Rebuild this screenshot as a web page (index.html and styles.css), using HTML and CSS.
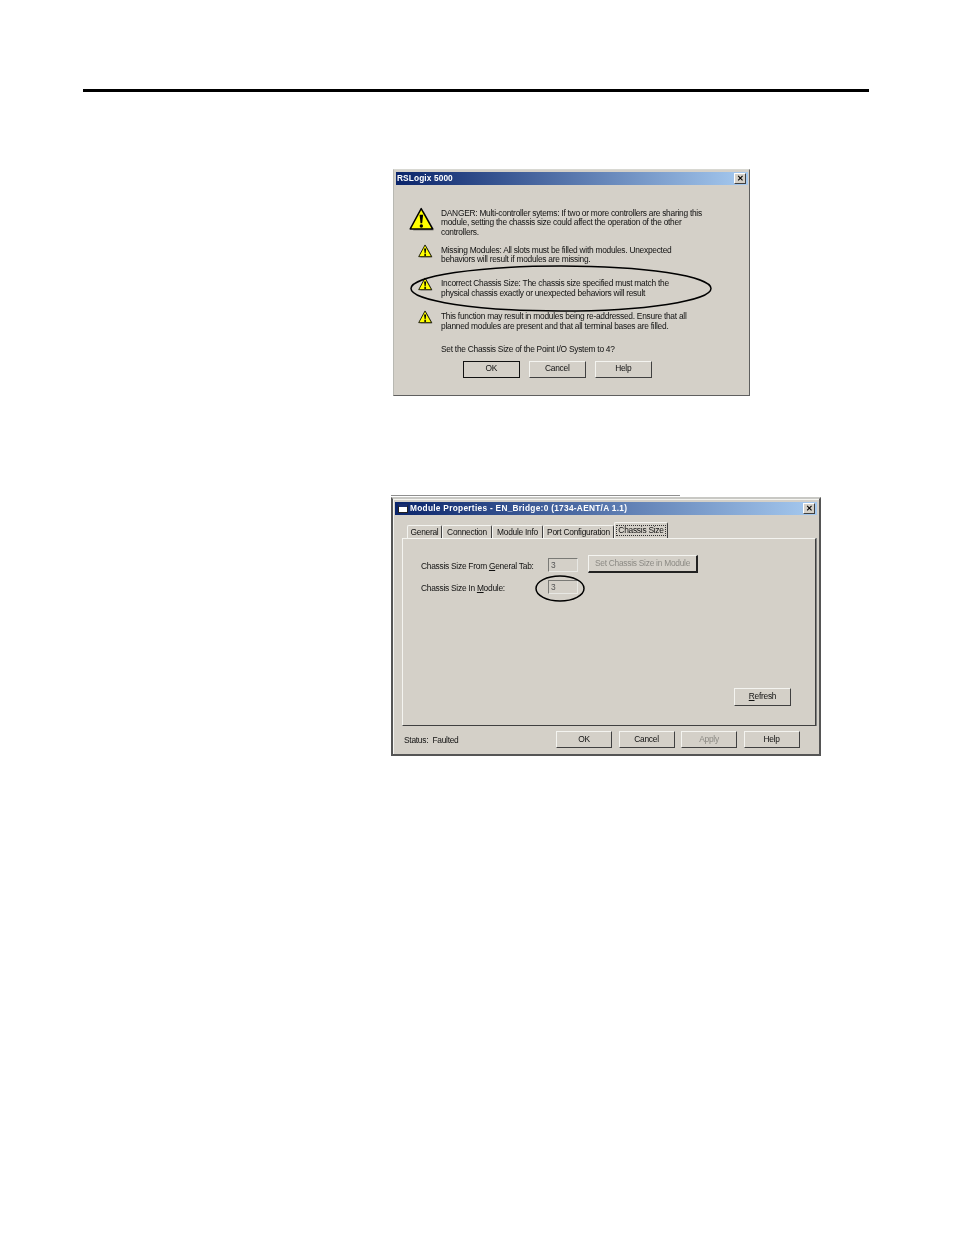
FILE: index.html
```html
<!DOCTYPE html>
<html lang="en">
<head>
<meta charset="utf-8">
<title>Chassis Size</title>
<link rel="stylesheet" href="styles.css">
</head>
<body>
<svg class="defs" width="0" height="0" aria-hidden="true">
  <symbol id="warn" viewBox="0 0 32 32">
    <path d="M5 29 L30 29 L31 27 L30 26 L18 5 Z" fill="#8a8780"/>
    <path d="M15 2 L29 27 L1.500 27 Z" fill="#ffff00" stroke="#000" stroke-width="1.800" stroke-linejoin="round"/>
    <path d="M13 9.500 H17.400 L16.200 20 H14.200 Z" fill="#000"/>
    <circle cx="15.200" cy="23.300" r="2.100" fill="#000"/>
  </symbol>
</svg>
<div class="rule"></div>

<section class="dlg dlg-one">
  <header class="title"><span class="title-text">RSLogix 5000</span><span class="close">✕</span></header>
  <div class="msgs">
    <div class="msg msg-danger">
      <svg class="icon-big"><use href="#warn"/></svg>
      <p>DANGER: Multi-controller sytems: If two or more controllers are sharing this<br>module, setting the chassis size could affect the operation of the other<br>controllers.</p>
    </div>
    <div class="msg msg-missing">
      <svg class="icon-small"><use href="#warn"/></svg>
      <p>Missing Modules: All slots must be filled with modules. Unexpected<br>behaviors will result if modules are missing.</p>
    </div>
    <div class="msg msg-size">
      <svg class="icon-small"><use href="#warn"/></svg>
      <p>Incorrect Chassis Size: The chassis size specified must match the<br>physical chassis exactly or unexpected behaviors will result</p>
    </div>
    <div class="msg msg-func">
      <svg class="icon-small"><use href="#warn"/></svg>
      <p>This function may result in modules being re-addressed. Ensure that all<br>planned modules are present and that all terminal bases are filled.</p>
    </div>
    <p class="question">Set the Chassis Size of the Point I/O System to 4?</p>
  </div>
  <div class="btns-one">
    <span class="btn btn-default">OK</span>
    <span class="btn">Cancel</span>
    <span class="btn">Help</span>
  </div>
  <svg class="ellipse ellipse-one" viewBox="0 0 304 47"><ellipse cx="152" cy="23.500" rx="150" ry="22.500" fill="none" stroke="#000" stroke-width="1.500"/></svg>
</section>

<div class="stray"></div>
<section class="dlg dlg-two">
  <header class="title">
    <span class="sysicon"></span>
    <span class="title-text">Module Properties - EN_Bridge:0 (1734-AENT/A 1.1)</span>
    <span class="close">✕</span>
  </header>
  <nav class="tabs">
    <span class="tab tab-general">General</span>
    <span class="tab tab-conn">Connection</span>
    <span class="tab tab-info">Module Info</span>
    <span class="tab tab-port">Port Configuration</span>
    <span class="tab tab-active"><span class="focus">Chassis Size</span></span>
  </nav>
  <div class="panel">
    <div class="field-row field-row-a">
      <span class="label">Chassis Size From <u>G</u>eneral Tab:</span>
      <span class="input">3</span>
      <span class="btn btn-set">Set Chassis Size in Module</span>
    </div>
    <div class="field-row field-row-b">
      <span class="label">Chassis Size In <u>M</u>odule:</span>
      <span class="input">3</span>
    </div>
    <div class="refresh-row"><span class="btn btn-refresh"><span><u>R</u>efresh</span></span></div>
    <svg class="ellipse ellipse-two" viewBox="0 0 50 27"><ellipse cx="25" cy="13.500" rx="24" ry="12.500" fill="none" stroke="#000" stroke-width="1.500"/></svg>
  </div>
  <footer class="foot">
    <span class="status">Status:&nbsp; Faulted</span>
    <span class="btn">OK</span>
    <span class="btn">Cancel</span>
    <span class="btn btn-disabled">Apply</span>
    <span class="btn">Help</span>
  </footer>
</section>
</body>
</html>
```
FILE: styles.css
```css
* { box-sizing: border-box; }
html, body { margin: 0; padding: 0; background: #fff; }
body {
  width: 954px;
  height: 1235px;
  overflow: hidden;
  font-family: "Liberation Sans", Arial, sans-serif;
  font-size: 8.400px;
  letter-spacing: -0.260px;
  line-height: 9.500px;
  color: #111;
  padding-top: 89px;
}
.defs { position: absolute; }
p { margin: 0; }
.rule { height: 3px; width: 786px; margin-left: 83px; background: #000; }

.dlg {
  position: relative;
  background: #d4d0c8;
  border: 1px solid #5f5f5f;
  border-top-color: #d8d8d2;
  border-left-color: #b8b8b2;
  filter: blur(0.3px);
}
.dlg-one { width: 357px; height: 227px; margin: 77px 0 0 393px; padding: 2px 1px 0 2px; }
.title {
  height: 13px;
  display: flex;
  align-items: center;
  color: #fff;
  font-weight: bold;
  font-size: 8.300px;
  letter-spacing: 0.120px;
  background: linear-gradient(90deg, #0a246a, #a6caf0);
  padding: 0 2px 0 1px;
}
.title-text { flex: 1; white-space: nowrap; }
.close {
  width: 12px; height: 11px;
  display: flex; align-items: center; justify-content: center;
  background: #d4d0c8; color: #000;
  font-size: 8px; font-weight: bold; letter-spacing: 0;
  border: 1px solid; border-color: #fff #404040 #404040 #fff;
}
.msgs { padding: 23.500px 0 0 45px; }
.msg { position: relative; }
.msg p { white-space: nowrap; }
.msg svg { position: absolute; }
.icon-big { width: 26px; height: 26px; left: -32px; top: -2px; }
.icon-small { width: 15px; height: 15px; left: -23px; top: -2px; }
.msg-missing { margin-top: 8.500px; }
.msg-size { margin-top: 14.500px; }
.msg-func { margin-top: 14px; }
.question { margin-top: 14px; white-space: nowrap; }

.btn {
  display: flex; align-items: center; justify-content: center;
  background: #d4d0c8;
  border: 1px solid; border-color: #f4f4f0 #404040 #404040 #f4f4f0;
  white-space: nowrap;
}
.btn-default { border: 1.500px solid #111; }
.btn-disabled { color: #8c8a84; }
.btns-one { display: flex; gap: 9.500px; margin: 6px 0 0 67px; }
.btns-one .btn { width: 56.500px; height: 17px; }

.ellipse { position: absolute; display: block; }
.ellipse-one { left: 15px; top: 95px; width: 304px; height: 47px; }

.stray { width: 289px; height: 1px; margin: 99px 0 0 391px; background: #8f8f8f; }
.dlg-two {
  width: 430px; height: 259px; margin: 1px 0 0 391px;
  border: 2px solid #555;
  border-top-color: #c8c8c4;
  padding: 3px 2px 0 2px;
  box-shadow: inset 1px 1px 0 #f4f4f0;
}
.dlg-two .title { padding: 0 2px 0 3px; gap: 2px; letter-spacing: 0.290px; }
.sysicon {
  width: 10px; height: 9px;
  background: #fff;
  border: 1px solid #222; border-top: 3px solid #1a2f70;
}
.tabs { display: flex; align-items: flex-end; height: 23px; padding-left: 12px; }
.tab {
  display: block; height: 13px; line-height: 13px; padding: 0;
  text-align: center; white-space: nowrap;
  border: 1px solid; border-color: #f4f4f0 #404040 transparent #f4f4f0;
  border-bottom: 0; border-radius: 2px 2px 0 0;
}
.tab-general { width: 35px; }
.tab-conn { width: 50px; }
.tab-info { width: 51px; }
.tab-port { width: 71px; }
.tab-active { width: 54px; height: 16px; padding: 2px 1px 0; }
.focus { display: block; height: 11px; line-height: 9px; border: 1px dotted #333; }
.panel {
  position: relative;
  width: 414px; height: 188px; margin-left: 7px;
  border: 1px solid; border-color: #f4f4f0 #404040 #404040 #f4f4f0;
  box-shadow: 1px 0 0 #808080;
  padding: 16px 0 0 18px;
}
.field-row { display: flex; align-items: flex-start; height: 17px; }
.field-row-b { margin-top: 6px; }
.label { width: 127px; white-space: nowrap; }
.field-row-a .label { margin-top: 6.500px; }
.field-row-b .label { margin-top: 5.500px; }
.input {
  width: 30px; height: 14px; padding: 1px 0 0 2px;
  color: #555; line-height: 10px;
  border: 1px solid; border-color: #7a7a76 #e8e8e4 #e8e8e4 #7a7a76;
}
.field-row-a .input { margin-top: 3px; }
.field-row-b .input { margin-top: 2px; }
.btn-set {
  width: 110px; height: 18px; margin-left: 10px;
  color: #8c8a84;
  border-right: 2px solid #222; border-bottom: 2px solid #222;
}
.refresh-row { display: flex; justify-content: flex-end; padding: 93px 24px 0 0; }
.btn-refresh { width: 57px; height: 18px; }
.ellipse-two { left: 132px; top: 36px; width: 50px; height: 27px; }
.foot { display: flex; align-items: flex-start; gap: 6.500px; padding: 5px 0 0 9px; height: 24px; }
.status { width: 145.500px; padding-top: 5px; white-space: nowrap; }
.foot .btn { width: 56px; height: 17px; }
u { text-underline-offset: 1px; }
```
